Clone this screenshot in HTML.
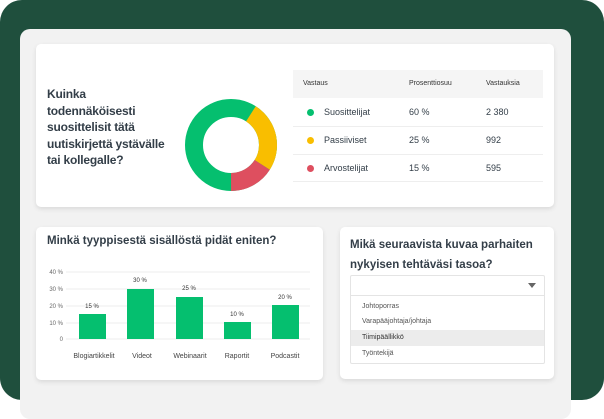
<!DOCTYPE html><html><head><meta charset="utf-8"><style>
*{margin:0;padding:0;box-sizing:border-box}
body{width:604px;height:400px;overflow:hidden;background:#fff;font-family:"Liberation Sans",sans-serif;position:relative}
.bg{position:absolute;left:0;top:0;width:604px;height:400px;background:#1f4f3d;border-radius:22px}
.panel{position:absolute;left:20px;top:29px;width:551px;height:390px;background:#f2f2f2;border-radius:10px}
.card{position:absolute;background:#fff;border-radius:5px;box-shadow:0 2px 5px rgba(0,0,0,.1)}
.t{position:absolute;font-weight:bold;color:#333e48}
.s{position:absolute;font-size:9px;color:#333e48}
.sm{position:absolute;font-size:7px;color:#555}
</style></head><body>
<div class="bg"></div><div class="panel"></div>
<div class="card" style="left:36px;top:44px;width:518px;height:163px"></div>
<div class="card" style="left:36px;top:227px;width:287px;height:153px"></div>
<div class="card" style="left:340px;top:227px;width:214px;height:152px"></div>
<div class="t" style="left:47px;top:86px;font-size:12px;line-height:16.5px;width:135px;letter-spacing:-0.2px">Kuinka<br>todennäköisesti<br>suosittelisit tätä<br>uutiskirjettä ystävälle<br>tai kollegalle?</div>
<svg style="position:absolute;left:184px;top:98px" width="94" height="94" viewBox="0 0 94 94">
<g transform="rotate(-90 47 47)">
<circle cx="47" cy="47" r="37" fill="none" stroke="#05bf6f" stroke-width="18" stroke-dasharray="232.5 500"/>
<circle cx="47" cy="47" r="37" fill="none" stroke="#f9be00" stroke-width="18" stroke-dasharray="0 21 58 500"/>
<circle cx="47" cy="47" r="37" fill="none" stroke="#de4f5f" stroke-width="18" stroke-dasharray="0 79 37 500"/>
</g></svg>
<div style="position:absolute;left:293px;top:70px;width:250px;height:28px;background:#f5f5f5"></div>
<div class="sm" style="left:303px;top:80px;color:#333">Vastaus</div>
<div class="sm" style="left:409px;top:80px;color:#333">Prosenttiosuu</div>
<div class="sm" style="left:486px;top:80px;color:#333">Vastauksia</div>
<div style="position:absolute;left:293px;top:126px;width:250px;border-top:1px solid #eee"></div>
<div style="position:absolute;left:293px;top:154px;width:250px;border-top:1px solid #eee"></div>
<div style="position:absolute;left:293px;top:181px;width:250px;border-top:1px solid #eee"></div>
<div style="position:absolute;left:307px;top:109px;width:7px;height:7px;border-radius:50%;background:#05bf6f"></div>
<div style="position:absolute;left:307px;top:137px;width:7px;height:7px;border-radius:50%;background:#f9be00"></div>
<div style="position:absolute;left:307px;top:165px;width:7px;height:7px;border-radius:50%;background:#de4f5f"></div>
<div class="s" style="left:324px;top:107px">Suosittelijat</div><div class="s" style="left:409px;top:107px">60 %</div><div class="s" style="left:486px;top:107px">2 380</div>
<div class="s" style="left:324px;top:135px">Passiiviset</div><div class="s" style="left:409px;top:135px">25 %</div><div class="s" style="left:486px;top:135px">992</div>
<div class="s" style="left:324px;top:163px">Arvostelijat</div><div class="s" style="left:409px;top:163px">15 %</div><div class="s" style="left:486px;top:163px">595</div>
<div class="t" style="left:47px;top:235px;font-size:11.5px">Minkä tyyppisestä sisällöstä pidät eniten?</div>
<svg style="position:absolute;left:40px;top:265px" width="280" height="100">
<g stroke="#eee" stroke-width="1"><line x1="26" y1="7" x2="270" y2="7"/><line x1="26" y1="24" x2="270" y2="24"/><line x1="26" y1="41" x2="270" y2="41"/><line x1="26" y1="58" x2="270" y2="58"/><line x1="26" y1="74" x2="270" y2="74"/></g>
<g font-family="Liberation Sans" font-size="6" fill="#666" text-anchor="end"><text x="23" y="9">40 %</text><text x="23" y="26">30 %</text><text x="23" y="43">20 %</text><text x="23" y="60">10 %</text><text x="23" y="76">0</text></g>
<g fill="#05bf6f"><rect x="39" y="49" width="27" height="25"/><rect x="87" y="24" width="27" height="50"/><rect x="136" y="32" width="27" height="42"/><rect x="184" y="57" width="27" height="17"/><rect x="232" y="40" width="27" height="34"/></g>
<g font-family="Liberation Sans" font-size="6" fill="#333" text-anchor="middle"><text x="52" y="43">15 %</text><text x="100" y="17">30 %</text><text x="149" y="25">25 %</text><text x="197" y="51">10 %</text><text x="245" y="34">20 %</text></g>
<g font-family="Liberation Sans" font-size="7" fill="#444" text-anchor="middle"><text x="54" y="93">Blogiartikkelit</text><text x="102" y="93">Videot</text><text x="150" y="93">Webinaarit</text><text x="197" y="93">Raportit</text><text x="245" y="93">Podcastit</text></g>
</svg>
<div class="t" style="left:350px;top:235px;font-size:11.5px;line-height:20px;width:200px">Mikä seuraavista kuvaa parhaiten nykyisen tehtäväsi tasoa?</div>
<div style="position:absolute;left:350px;top:275px;width:195px;height:89px;border:1px solid #e4e4e4;border-radius:2px"></div>
<div style="position:absolute;left:350px;top:295px;width:195px;border-top:1px solid #e4e4e4"></div>
<div style="position:absolute;left:528px;top:283px;width:0;height:0;border-left:4px solid transparent;border-right:4px solid transparent;border-top:5px solid #666"></div>
<div style="position:absolute;left:351px;top:330px;width:193px;height:16px;background:#ececec"></div>
<div class="sm" style="left:362px;top:303px">Johtoporras</div>
<div class="sm" style="left:362px;top:318px">Varapääjohtaja/johtaja</div>
<div class="sm" style="left:362px;top:334px;color:#333">Tiimipäällikkö</div>
<div class="sm" style="left:362px;top:350px">Työntekijä</div>
</body></html>
